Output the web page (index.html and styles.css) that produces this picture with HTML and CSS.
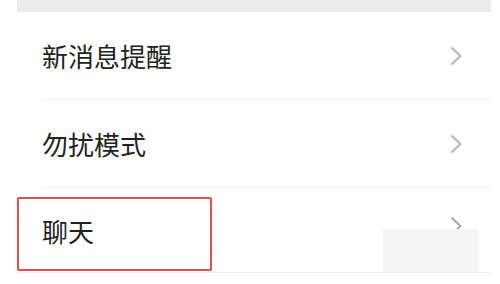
FILE: index.html
```html
<!DOCTYPE html>
<html lang="zh-CN">
<head>
    <meta charset="UTF-8">
    <meta name="viewport" content="width=device-width, initial-scale=1.0">
    <title>设置</title>
    <link rel="stylesheet" href="styles.css">
</head>
<body>
    <div class="settings">
        <div class="top-band"></div>
        <div class="row">
            <span class="label">新消息提醒</span>
            <svg class="chevron" width="12" height="20" viewBox="0 0 12 20"><path d="M1.5 1.5 L10.5 10 L1.5 18.5" fill="none" stroke="#b5b5b5" stroke-width="2"/></svg>
        </div>
        <div class="row">
            <span class="label">勿扰模式</span>
            <svg class="chevron" width="12" height="20" viewBox="0 0 12 20"><path d="M1.5 1.5 L10.5 10 L1.5 18.5" fill="none" stroke="#b5b5b5" stroke-width="2"/></svg>
        </div>
        <div class="row last">
            <span class="label">聊天</span>
            <svg class="chevron up" width="12" height="20" viewBox="0 0 12 20"><path d="M1.5 1.5 L10.5 10 L1.5 18.5" fill="none" stroke="#a8a8a8" stroke-width="2"/></svg>
            <div class="highlight"></div>
            <div class="patch"></div>
        </div>
    </div>
</body>
</html>
```

FILE: styles.css
```css
body {
    margin: 0;
    background: #fff;
    font-family: "Noto Sans CJK SC", "Noto Sans", sans-serif;
}
.settings {
    margin-left: 17px;
    width: 474px;
}
.top-band {
    height: 12px;
    background: #ececec;
}
.row {
    position: relative;
    display: flex;
    align-items: center;
    justify-content: space-between;
    height: 88px;
    padding: 0 29px 0 25px;
}
.row::after {
    content: "";
    position: absolute;
    left: 25px;
    right: 0;
    bottom: 0;
    height: 1px;
    background: #f0f0f0;
}
.row:first-of-type {
    height: 86px;
}
.row.last {
    height: 85px;
}
.row.last::after {
    left: 0;
}
.label {
    font-size: 26px;
    color: #222;
    line-height: 1;
}
.chevron {
    display: block;
}
.chevron.up {
    margin-top: -10px;
}
.highlight {
    position: absolute;
    left: 0;
    top: 9px;
    width: 191px;
    height: 70px;
    border: 2px solid #e0524f;
    border-radius: 2px;
}
.patch {
    position: absolute;
    left: 366px;
    top: 41px;
    width: 95px;
    height: 45px;
    background: #f5f5f5;
}
```
